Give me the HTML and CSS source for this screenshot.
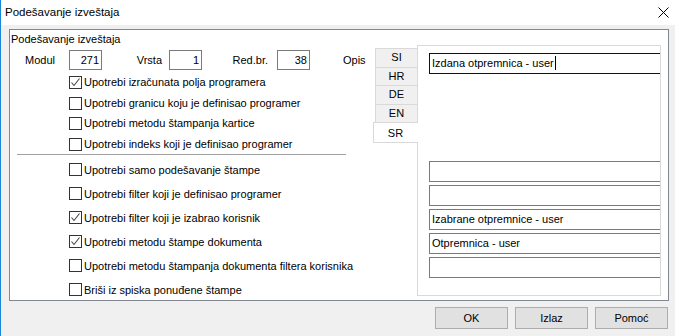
FILE: index.html
```html
<!DOCTYPE html>
<html lang="sr">
<head>
<meta charset="utf-8">
<title>Podešavanje izveštaja</title>
<link rel="stylesheet" href="styles.css">
</head>
<body>
<div class="window">
  <div class="titlebar">
    <span class="title">Podešavanje izveštaja</span>
    <svg class="close" width="11" height="11" viewBox="0 0 11 11"><path d="M0.5 0.5 L10.5 10.5 M10.5 0.5 L0.5 10.5" stroke="#000" stroke-width="1" fill="none"/></svg>
  </div>
  <div class="content">
    <div class="group">
      <div class="left">
        <div class="legend">Podešavanje izveštaja</div>
        <div class="idrow">
          <span class="lbl lbl-modul">Modul</span><span class="num">271</span>
          <span class="lbl lbl-vrsta">Vrsta</span><span class="num">1</span>
          <span class="lbl lbl-red">Red.br.</span><span class="num">38</span>
          <span class="lbl-opis">Opis</span>
        </div>
        <div class="checks checks-top">
          <div class="row"><span class="box checked"><svg width="11" height="11" viewBox="0 0 11 11"><path d="M1.5 5.5 L4 8.5 L9.5 1.5" stroke="#444" stroke-width="1.1" fill="none"/></svg></span><span class="txt">Upotrebi izračunata polja programera</span></div>
          <div class="row"><span class="box"></span><span class="txt">Upotrebi granicu koju je definisao programer</span></div>
          <div class="row"><span class="box"></span><span class="txt">Upotrebi metodu štampanja kartice</span></div>
          <div class="row"><span class="box"></span><span class="txt">Upotrebi indeks koji je definisao programer</span></div>
        </div>
        <div class="sep"></div>
        <div class="checks checks-bottom">
          <div class="row"><span class="box"></span><span class="txt">Upotrebi samo podešavanje štampe</span></div>
          <div class="row"><span class="box"></span><span class="txt">Upotrebi filter koji je definisao programer</span></div>
          <div class="row"><span class="box checked"><svg width="11" height="11" viewBox="0 0 11 11"><path d="M1.5 5.5 L4 8.5 L9.5 1.5" stroke="#444" stroke-width="1.1" fill="none"/></svg></span><span class="txt">Upotrebi filter koji je izabrao korisnik</span></div>
          <div class="row"><span class="box checked"><svg width="11" height="11" viewBox="0 0 11 11"><path d="M1.5 5.5 L4 8.5 L9.5 1.5" stroke="#444" stroke-width="1.1" fill="none"/></svg></span><span class="txt">Upotrebi metodu štampe dokumenta</span></div>
          <div class="row"><span class="box"></span><span class="txt">Upotrebi metodu štampanja dokumenta filtera korisnika</span></div>
          <div class="row"><span class="box"></span><span class="txt">Briši iz spiska ponuđene štampe</span></div>
        </div>
      </div>
      <div class="langs">
        <div class="tabs">
          <div class="tab">SI</div>
          <div class="tab">HR</div>
          <div class="tab">DE</div>
          <div class="tab">EN</div>
          <div class="tab tab-active">SR</div>
        </div>
        <div class="panel">
          <div class="field field-focus">Izdana otpremnica - user<span class="caret"></span></div>
          <div class="fields">
            <div class="field"></div>
            <div class="field"></div>
            <div class="field">Izabrane otpremnice - user</div>
            <div class="field">Otpremnica - user</div>
            <div class="field"></div>
          </div>
        </div>
      </div>
    </div>
    <div class="buttons">
      <div class="btn">OK</div>
      <div class="btn">Izlaz</div>
      <div class="btn">Pomoć</div>
    </div>
  </div>
</div>
</body>
</html>
```

FILE: styles.css
```css
* { box-sizing: border-box; }
html, body {
  margin: 0;
  padding: 0;
}
body {
  width: 675px;
  height: 336px;
  overflow: hidden;
  background: #f0f0f0;
  font-family: "Liberation Sans", Arial, sans-serif;
  font-size: 11px;
  color: #000;
}
.window {
  height: 336px;
  border-left: 1px solid #1a86d8;
  background: #f0f0f0;
}
.titlebar {
  height: 25px;
  background: #fff;
  display: flex;
  align-items: center;
  justify-content: space-between;
  padding: 0 6px 0 4px;
}
.title {
  font-size: 11.5px;
  line-height: 25px;
}
.close { display: block; }
.content {
  padding: 4px 7px 0 8px;
}
.group {
  width: 660px;
  height: 272px;
  border: 1px solid #828790;
  background: #fff;
  display: flex;
}
.left {
  width: 363px;
}
.legend {
  margin-top: 2px;
  padding-left: 1px;
  height: 14px;
  line-height: 14px;
}
.idrow {
  margin-top: 4px;
  height: 20px;
  display: grid;
  grid-template-columns: 59px 33px 67px 33px 75px 33px 1fr;
}
.lbl {
  text-align: right;
  line-height: 20px;
}
.lbl-modul { padding-right: 14px; }
.lbl-vrsta { padding-right: 7px; }
.lbl-red { padding-right: 9px; }
.lbl-opis {
  padding-left: 33px;
  line-height: 20px;
}
.num {
  border: 1px solid #7a7a7a;
  text-align: right;
  padding-right: 2px;
  line-height: 18px;
}
.checks {
  padding-left: 59px;
}
.checks-top {
  margin-top: 2px;
}
.checks-top .row {
  height: 20.5px;
}
.checks-top .box { margin-top: 4px; }
.checks-top .txt { line-height: 21px; }
.checks-bottom .row {
  height: 24px;
}
.checks-bottom .box { margin-top: 5px; }
.checks-bottom .txt { line-height: 24px; }
.row {
  display: flex;
  align-items: flex-start;
  white-space: nowrap;
}
.box {
  width: 13px;
  height: 13px;
  border: 1px solid #333;
  background: #fff;
  margin-right: 2px;
  flex: none;
}
.box svg { display: block; }
.sep {
  margin-left: 7px;
  width: 329px;
  height: 1px;
  background: #a0a0a0;
  margin-bottom: 3px;
}
.langs {
  display: flex;
  align-items: flex-start;
}
.tabs {
  width: 44px;
  margin-top: 18px;
}
.tab {
  margin-left: 2px;
  height: 18.5px;
  border: 1px solid #d9d9d9;
  border-bottom: none;
  border-right: none;
  background: #f0f0f0;
  text-align: center;
  line-height: 17.5px;
}
.tab-active {
  position: relative;
  z-index: 1;
  margin-left: 0;
  margin-right: -1px;
  height: 21px;
  background: #fff;
  border-bottom: 1px solid #d9d9d9;
  line-height: 20px;
  padding-right: 1px;
}
.panel {
  margin-top: 15px;
  width: 244px;
  height: 251px;
  border: 1px solid #d9d9d9;
  background: #fff;
  padding: 7px 0 0 11px;
  overflow: hidden;
}
.field {
  width: 240px;
  height: 21px;
  border: 1px solid #7a7a7a;
  padding-left: 2px;
  line-height: 19px;
  white-space: nowrap;
}
.field-focus {
  border-color: #111;
}
.caret {
  display: inline-block;
  width: 1px;
  height: 14px;
  background: #000;
  vertical-align: -3px;
  margin-left: 1px;
}
.fields {
  margin-top: 87px;
  display: flex;
  flex-direction: column;
  gap: 3px;
}
.buttons {
  margin-top: 6px;
  display: flex;
  justify-content: flex-end;
  gap: 7px;
}
.btn {
  width: 73px;
  height: 22px;
  background: #e1e1e1;
  border: 1px solid #adadad;
  text-align: center;
  line-height: 20px;
}
```
